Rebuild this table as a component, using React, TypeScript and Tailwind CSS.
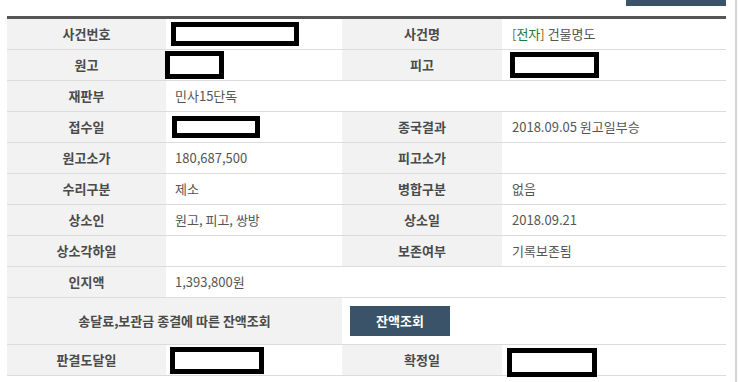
import React from "react";

const F = { fontFamily: '"Noto Sans CJK KR", "Noto Sans", sans-serif' };

function Label({ children, span = "" }: { children?: React.ReactNode; span?: string }) {
  return (
    <div
      className={`flex h-[31px] items-center justify-center border-b border-[#dcdcdc] bg-[#f2f2f2] text-[13px] font-bold text-[#4a4a4a] ${span}`}
    >
      {children}
    </div>
  );
}

function Val({ children, span = "", pl = "pl-[9px]" }: { children?: React.ReactNode; span?: string; pl?: string }) {
  return (
    <div
      className={`relative flex h-[31px] items-center border-b border-[#dcdcdc] bg-white text-[13px] text-[#555] ${pl} ${span}`}
    >
      {children}
    </div>
  );
}

function Redact({ cls }: { cls: string }) {
  return <div className={`absolute z-10 border-[5px] border-black bg-white ${cls}`} />;
}

export default function App() {
  return (
    <div className="flex h-[382px] w-[738px] overflow-hidden bg-white" style={F}>
      <div className="w-[726px] pl-[7px]">
        <div className="flex h-[16px] justify-end">
          <div className="h-[6px] w-[100px] bg-[#3a5368]" />
        </div>
        <div className="h-[3px] bg-[#555555]" />
        <div className="grid grid-cols-[159px_176px_160px_224px]">
          <Label>사건번호</Label>
          <Val>
            <Redact cls="left-[5px] top-[3px] h-[24px] w-[128px]" />
          </Val>
          <Label>사건명</Label>
          <Val pl="pl-[10px]">
            <span>
              <span className="text-[#7a6a10]">[</span>
              <span className="text-[#1d7a3a]">전자</span>
              <span className="text-[#7a6a10]">]</span> 건물명도
            </span>
          </Val>

          <Label>원고</Label>
          <Val>
            <Redact cls="left-[-1px] top-[1px] h-[28px] w-[59px]" />
          </Val>
          <Label>피고</Label>
          <Val>
            <Redact cls="left-[8px] top-[2px] h-[26px] w-[89px]" />
          </Val>

          <Label>재판부</Label>
          <Val span="col-span-3">민사15단독</Val>

          <Label>접수일</Label>
          <Val>
            <Redact cls="left-[6px] top-[4px] h-[22px] w-[88px]" />
          </Val>
          <Label>종국결과</Label>
          <Val pl="pl-[10px]">2018.09.05 원고일부승</Val>

          <Label>원고소가</Label>
          <Val>180,687,500</Val>
          <Label>피고소가</Label>
          <Val pl="pl-[10px]"></Val>

          <Label>수리구분</Label>
          <Val>제소</Val>
          <Label>병합구분</Label>
          <Val pl="pl-[10px]">없음</Val>

          <Label>상소인</Label>
          <Val>원고, 피고, 쌍방</Val>
          <Label>상소일</Label>
          <Val pl="pl-[10px]">2018.09.21</Val>

          <Label>상소각하일</Label>
          <Val></Val>
          <Label>보존여부</Label>
          <Val pl="pl-[10px]">기록보존됨</Val>

          <Label>인지액</Label>
          <Val span="col-span-3">1,393,800원</Val>

          <div className="col-span-2 flex h-[47px] items-center justify-center border-b border-[#dcdcdc] bg-[#f2f2f2] text-[13px] font-bold text-[#4a4a4a]">
            송달료,보관금 종결에 따른 잔액조회
          </div>
          <div className="col-span-2 flex h-[47px] items-center border-b border-[#dcdcdc] bg-white pl-[8px]">
            <button className="flex h-[30px] w-[100px] items-center justify-center bg-[#3a5368] text-[13px] font-bold text-white">
              잔액조회
            </button>
          </div>

          <Label>판결도달일</Label>
          <Val>
            <Redact cls="left-[4px] top-[2px] h-[27px] w-[94px]" />
          </Val>
          <Label>확정일</Label>
          <Val>
            <Redact cls="left-[5px] top-[3px] h-[29px] w-[90px]" />
          </Val>
        </div>
      </div>
      <div className="ml-[9px] h-full w-[2px] bg-[#d4d4d4]" />
    </div>
  );
}
